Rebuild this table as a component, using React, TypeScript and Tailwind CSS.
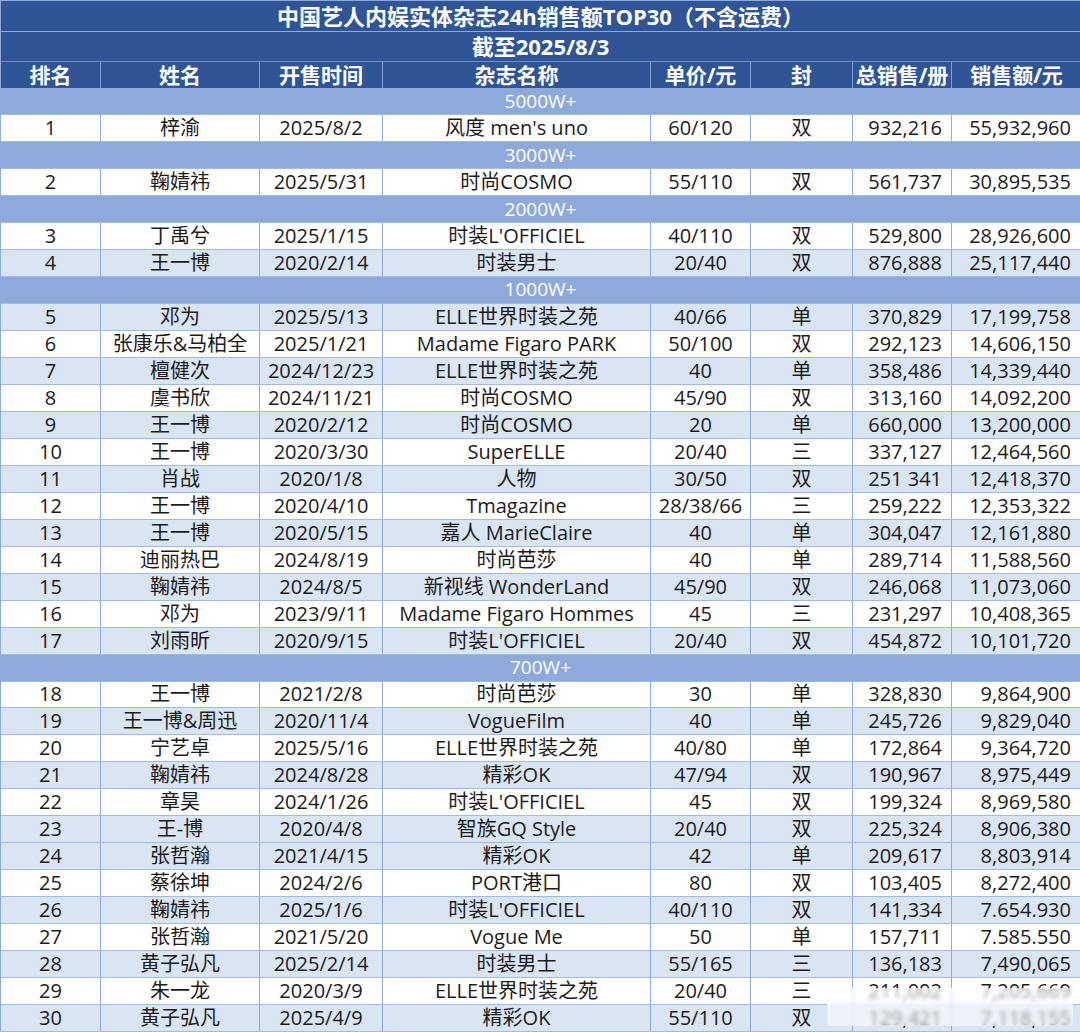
import React from "react";

type Row = {
  rank: number;
  name: string;
  date: string;
  mag: string;
  price: string;
  cover: string;
  total: string;
  sales: string;
  band?: boolean;
};

type Block = { label: string; rows: Row[] };

const r = (
  rank: number,
  name: string,
  date: string,
  mag: string,
  price: string,
  cover: string,
  total: string,
  sales: string,
  band = false
): Row => ({ rank, name, date, mag, price, cover, total, sales, band });

const blocks: Block[] = [
  {
    label: "5000W+",
    rows: [r(1, "梓渝", "2025/8/2", "风度 men's uno", "60/120", "双", "932,216", "55,932,960")],
  },
  {
    label: "3000W+",
    rows: [r(2, "鞠婧祎", "2025/5/31", "时尚COSMO", "55/110", "双", "561,737", "30,895,535")],
  },
  {
    label: "2000W+",
    rows: [
      r(3, "丁禹兮", "2025/1/15", "时装L'OFFICIEL", "40/110", "双", "529,800", "28,926,600"),
      r(4, "王一博", "2020/2/14", "时装男士", "20/40", "双", "876,888", "25,117,440", true),
    ],
  },
  {
    label: "1000W+",
    rows: [
      r(5, "邓为", "2025/5/13", "ELLE世界时装之苑", "40/66", "单", "370,829", "17,199,758", true),
      r(6, "张康乐&马柏全", "2025/1/21", "Madame Figaro PARK", "50/100", "双", "292,123", "14,606,150"),
      r(7, "檀健次", "2024/12/23", "ELLE世界时装之苑", "40", "单", "358,486", "14,339,440", true),
      r(8, "虞书欣", "2024/11/21", "时尚COSMO", "45/90", "双", "313,160", "14,092,200"),
      r(9, "王一博", "2020/2/12", "时尚COSMO", "20", "单", "660,000", "13,200,000", true),
      r(10, "王一博", "2020/3/30", "SuperELLE", "20/40", "三", "337,127", "12,464,560"),
      r(11, "肖战", "2020/1/8", "人物", "30/50", "双", "251 341", "12,418,370", true),
      r(12, "王一博", "2020/4/10", "Tmagazine", "28/38/66", "三", "259,222", "12,353,322"),
      r(13, "王一博", "2020/5/15", "嘉人 MarieClaire", "40", "单", "304,047", "12,161,880", true),
      r(14, "迪丽热巴", "2024/8/19", "时尚芭莎", "40", "单", "289,714", "11,588,560"),
      r(15, "鞠婧祎", "2024/8/5", "新视线 WonderLand", "45/90", "双", "246,068", "11,073,060", true),
      r(16, "邓为", "2023/9/11", "Madame Figaro Hommes", "45", "三", "231,297", "10,408,365"),
      r(17, "刘雨昕", "2020/9/15", "时装L'OFFICIEL", "20/40", "双", "454,872", "10,101,720", true),
    ],
  },
  {
    label: "700W+",
    rows: [
      r(18, "王一博", "2021/2/8", "时尚芭莎", "30", "单", "328,830", "9,864,900"),
      r(19, "王一博&周迅", "2020/11/4", "VogueFilm", "40", "单", "245,726", "9,829,040", true),
      r(20, "宁艺卓", "2025/5/16", "ELLE世界时装之苑", "40/80", "单", "172,864", "9,364,720"),
      r(21, "鞠婧祎", "2024/8/28", "精彩OK", "47/94", "双", "190,967", "8,975,449", true),
      r(22, "章昊", "2024/1/26", "时装L'OFFICIEL", "45", "双", "199,324", "8,969,580"),
      r(23, "王-博", "2020/4/8", "智族GQ Style", "20/40", "双", "225,324", "8,906,380", true),
      r(24, "张哲瀚", "2021/4/15", "精彩OK", "42", "单", "209,617", "8,803,914", true),
      r(25, "蔡徐坤", "2024/2/6", "PORT港口", "80", "双", "103,405", "8,272,400"),
      r(26, "鞠婧祎", "2025/1/6", "时装L'OFFICIEL", "40/110", "双", "141,334", "7.654.930", true),
      r(27, "张哲瀚", "2021/5/20", "Vogue Me", "50", "单", "157,711", "7.585.550"),
      r(28, "黄子弘凡", "2025/2/14", "时装男士", "55/165", "三", "136,183", "7,490,065", true),
      r(29, "朱一龙", "2020/3/9", "ELLE世界时装之苑", "20/40", "三", "211,002", "7,205,669"),
      r(30, "黄子弘凡", "2025/4/9", "精彩OK", "55/110", "双", "129,421", "7,118,155", true),
    ],
  },
];

const cols = "grid grid-cols-[100px_159px_123px_268px_100px_102px_99px_129px]";
const headers = ["排名", "姓名", "开售时间", "杂志名称", "单价/元", "封", "总销售/册", "销售额/元"];

function DataRow({ row }: { row: Row }) {
  const cell = "flex items-center border-r border-[#8eaadb] leading-none";
  return (
    <div
      className={`${cols} flex-1 min-h-0 border-b border-[#9fbbe3] text-[20px] text-[#1c1c1c] ${
        row.band ? "bg-[#dae5f3]" : "bg-white"
      }`}
    >
      <div className={`${cell} justify-center`}>{row.rank}</div>
      <div className={`${cell} justify-center whitespace-nowrap`}>{row.name}</div>
      <div className={`${cell} justify-center`}>{row.date}</div>
      <div className={`${cell} justify-center whitespace-nowrap`}>{row.mag}</div>
      <div className={`${cell} justify-center`}>{row.price}</div>
      <div className={`${cell} justify-center`}>{row.cover}</div>
      <div className={`${cell} justify-end pr-[9px]`}>{row.total}</div>
      <div className={`${cell} justify-end pr-[10px] border-r-0`}>{row.sales}</div>
    </div>
  );
}

export default function App() {
  return (
    <div
      className="relative w-[1080px] h-[1032px] flex flex-col overflow-hidden border-l border-[#8eaadb] bg-white"
      style={{ fontFamily: '"Open Sans", "Noto Sans CJK SC", sans-serif' }}
    >
      {/* title */}
      <div className="flex-[1.14] min-h-0 flex items-center justify-center bg-[#2f5597] border-t border-[#8eaadb] border-b border-b-[#8faadc] text-white text-[22px] font-bold leading-none">
        中国艺人内娱实体杂志24h销售额TOP30（不含运费）
      </div>
      <div className="flex-[1.14] min-h-0 flex items-center justify-center bg-[#2f5597] border-b border-[#6f8fc9] text-white text-[22px] font-bold leading-none">
        截至2025/8/3
      </div>

      {/* header */}
      <div className={`${cols} flex-1 min-h-0 bg-[#2f5597] text-white text-[21px] font-bold`}>
        {headers.map((h, i) => (
          <div
            key={h}
            className={`flex items-center justify-center leading-none ${
              i < headers.length - 1 ? "border-r border-[#7f9fd6]" : ""
            }`}
          >
            {h}
          </div>
        ))}
      </div>

      {blocks.map((b) => (
        <React.Fragment key={b.label}>
          <div className="flex-1 min-h-0 flex items-center justify-center bg-[#8eaadb] border-b border-[#9fbbe3] text-white text-[19px] leading-none">
            {b.label}
          </div>
          {b.rows.map((row) => (
            <DataRow key={row.rank} row={row} />
          ))}
        </React.Fragment>
      ))}

      {/* watermark smear */}
      <div className="absolute left-[826px] top-[988px] w-[246px] h-[38px] bg-white/55 backdrop-blur-[2px] rounded-sm" />
    </div>
  );
}
